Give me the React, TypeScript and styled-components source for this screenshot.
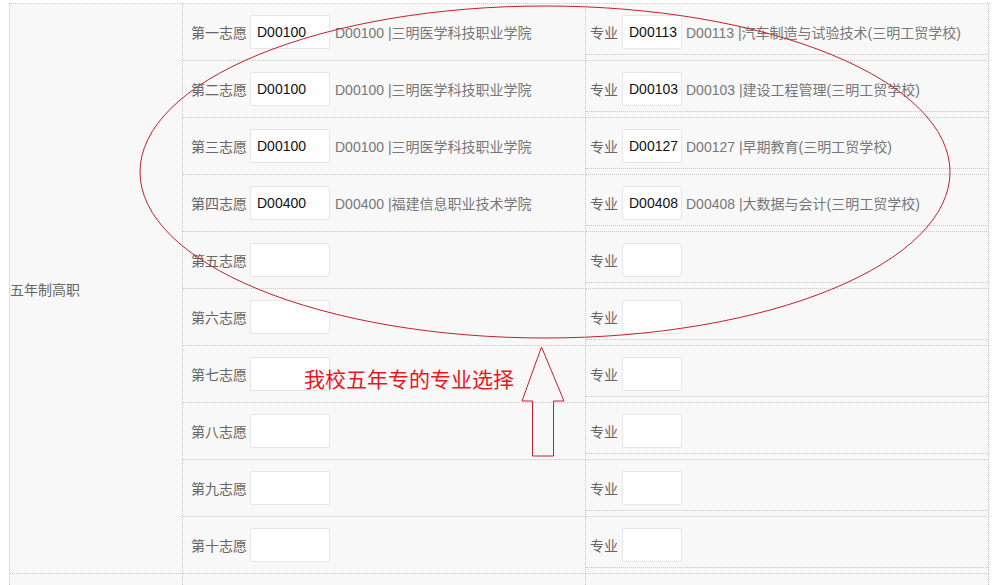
import React from 'react'
import styled, { createGlobalStyle } from 'styled-components'

const GlobalStyle = createGlobalStyle`
  html, body {
    margin: 0;
    padding: 0;
    background: #fff;
  }
  body {
    font-family: "Liberation Sans", "Noto Sans CJK SC", sans-serif;
    font-size: 14px;
    color: #666;
  }
`

const Page = styled.div`
  position: relative;
  padding: 3px 0 0 9px;
  height: 582px;
  overflow: hidden;
`

const Table = styled.div`
  width: 980px;
  border-top: 1px dotted #c8c8c8;
  border-left: 1px dotted #c8c8c8;
  background: #f8f8f8;
`

const Group = styled.div`
  display: flex;
`

const GroupLabel = styled.div`
  box-sizing: border-box;
  width: 173px;
  flex: none;
  display: flex;
  align-items: center;
  border-right: 1px dotted #c8c8c8;
  border-bottom: 1px dotted #c8c8c8;
`

const Rows = styled.div`
  display: flex;
  flex-direction: column;
`

const Row = styled.div`
  display: flex;
`

const ChoiceCell = styled.div`
  box-sizing: border-box;
  width: 403px;
  height: 57px;
  display: flex;
  align-items: center;
  padding-left: 8px;
  border-right: 1px dotted #c8c8c8;
  border-bottom: 1px dotted #c8c8c8;
`

const MajorCell = styled.div`
  box-sizing: border-box;
  width: 403px;
  height: 57px;
  padding-bottom: 5px;
  border-right: 1px dotted #c8c8c8;
  border-bottom: 1px dotted #c8c8c8;
`

const MajorInner = styled.div`
  box-sizing: border-box;
  height: 51px;
  display: flex;
  align-items: center;
  padding: 5px 0 0 4px;
  border-bottom: 1px dotted #c8c8c8;
`

const Label = styled.span<{ $gap: number; $w: number }>`
  flex: none;
  width: ${p => p.$w}px;
  color: #666;
  white-space: nowrap;
  margin-right: ${p => p.$gap}px;
`

const CodeInput = styled.input<{ $w: number }>`
  box-sizing: border-box;
  width: ${p => p.$w}px;
  height: 34px;
  margin: 0;
  padding: 0 0 0 6px;
  border: 1px solid #e6e6e6;
  border-radius: 2px;
  background: #fff;
  font-family: "Liberation Sans", "Noto Sans CJK SC", sans-serif;
  font-size: 14px;
  color: #111;
  outline: none;
`

const Desc = styled.span<{ $gap: number }>`
  color: #777;
  white-space: nowrap;
  margin-left: ${p => p.$gap}px;
`

const Overlay = styled.svg`
  position: absolute;
  left: 0;
  top: 0;
  pointer-events: none;
`

const Note = styled.div`
  position: absolute;
  left: 304px;
  top: 366px;
  font-family: "Noto Sans CJK SC", sans-serif;
  font-size: 21px;
  line-height: 24px;
  color: #e8161e;
  white-space: nowrap;
`

interface Pick {
  label: string
  major: string
  code?: string
  desc?: string
  majorCode?: string
  majorDesc?: string
}

const nums = ['一', '二', '三', '四', '五', '六', '七', '八', '九', '十']

const filled = [
  { code: 'D00100', desc: 'D00100 |三明医学科技职业学院', majorCode: 'D00113', majorDesc: 'D00113 |汽车制造与试验技术(三明工贸学校)' },
  { code: 'D00100', desc: 'D00100 |三明医学科技职业学院', majorCode: 'D00103', majorDesc: 'D00103 |建设工程管理(三明工贸学校)' },
  { code: 'D00100', desc: 'D00100 |三明医学科技职业学院', majorCode: 'D00127', majorDesc: 'D00127 |早期教育(三明工贸学校)' },
  { code: 'D00400', desc: 'D00400 |福建信息职业技术学院', majorCode: 'D00408', majorDesc: 'D00408 |大数据与会计(三明工贸学校)' },
]

const picks: Pick[] = nums.map((n, i) => ({ label: `第${n}志愿`, major: '专业', ...(filled[i] || {}) }))

const PickRow: React.FC<{ pick: Pick }> = ({ pick }) => (
  <Row>
    <ChoiceCell>
      <Label $gap={3} $w={56}>{pick.label}</Label>
      <CodeInput $w={80} readOnly value={pick.code || ''} />
      {pick.desc && <Desc $gap={5}>{pick.desc}</Desc>}
    </ChoiceCell>
    <MajorCell>
      <MajorInner>
        <Label $gap={4} $w={28}>{pick.major}</Label>
        <CodeInput $w={60} readOnly value={pick.majorCode || ''} />
        {pick.majorDesc && <Desc $gap={4}>{pick.majorDesc}</Desc>}
      </MajorInner>
    </MajorCell>
  </Row>
)

const App: React.FC = () => {
  return (
    <Page>
      <GlobalStyle />
      <Table>
        <Group>
          <GroupLabel>五年制高职</GroupLabel>
          <Rows>
            {picks.map(p => <PickRow key={p.label} pick={p} />)}
          </Rows>
        </Group>
        {/* next group, only its top edge shows at the bottom of the page */}
        <Group>
          <GroupLabel />
          <Rows>
            <PickRow pick={{ label: '', major: '' }} />
          </Rows>
        </Group>
      </Table>

      <Overlay width={1002} height={585} viewBox='0 0 1002 585'>
        <ellipse cx={545} cy={172} rx={405} ry={166} fill='none' stroke='#c4212b' strokeWidth={1} />
        <polygon
          points='541.5,347 564,401 553.5,401 553.5,456 532.5,456 532.5,401 522,401'
          fill='none'
          stroke='#c4212b'
          strokeWidth={1}
        />
      </Overlay>
      <Note>我校五年专的专业选择</Note>
    </Page>
  )
}

export default App
